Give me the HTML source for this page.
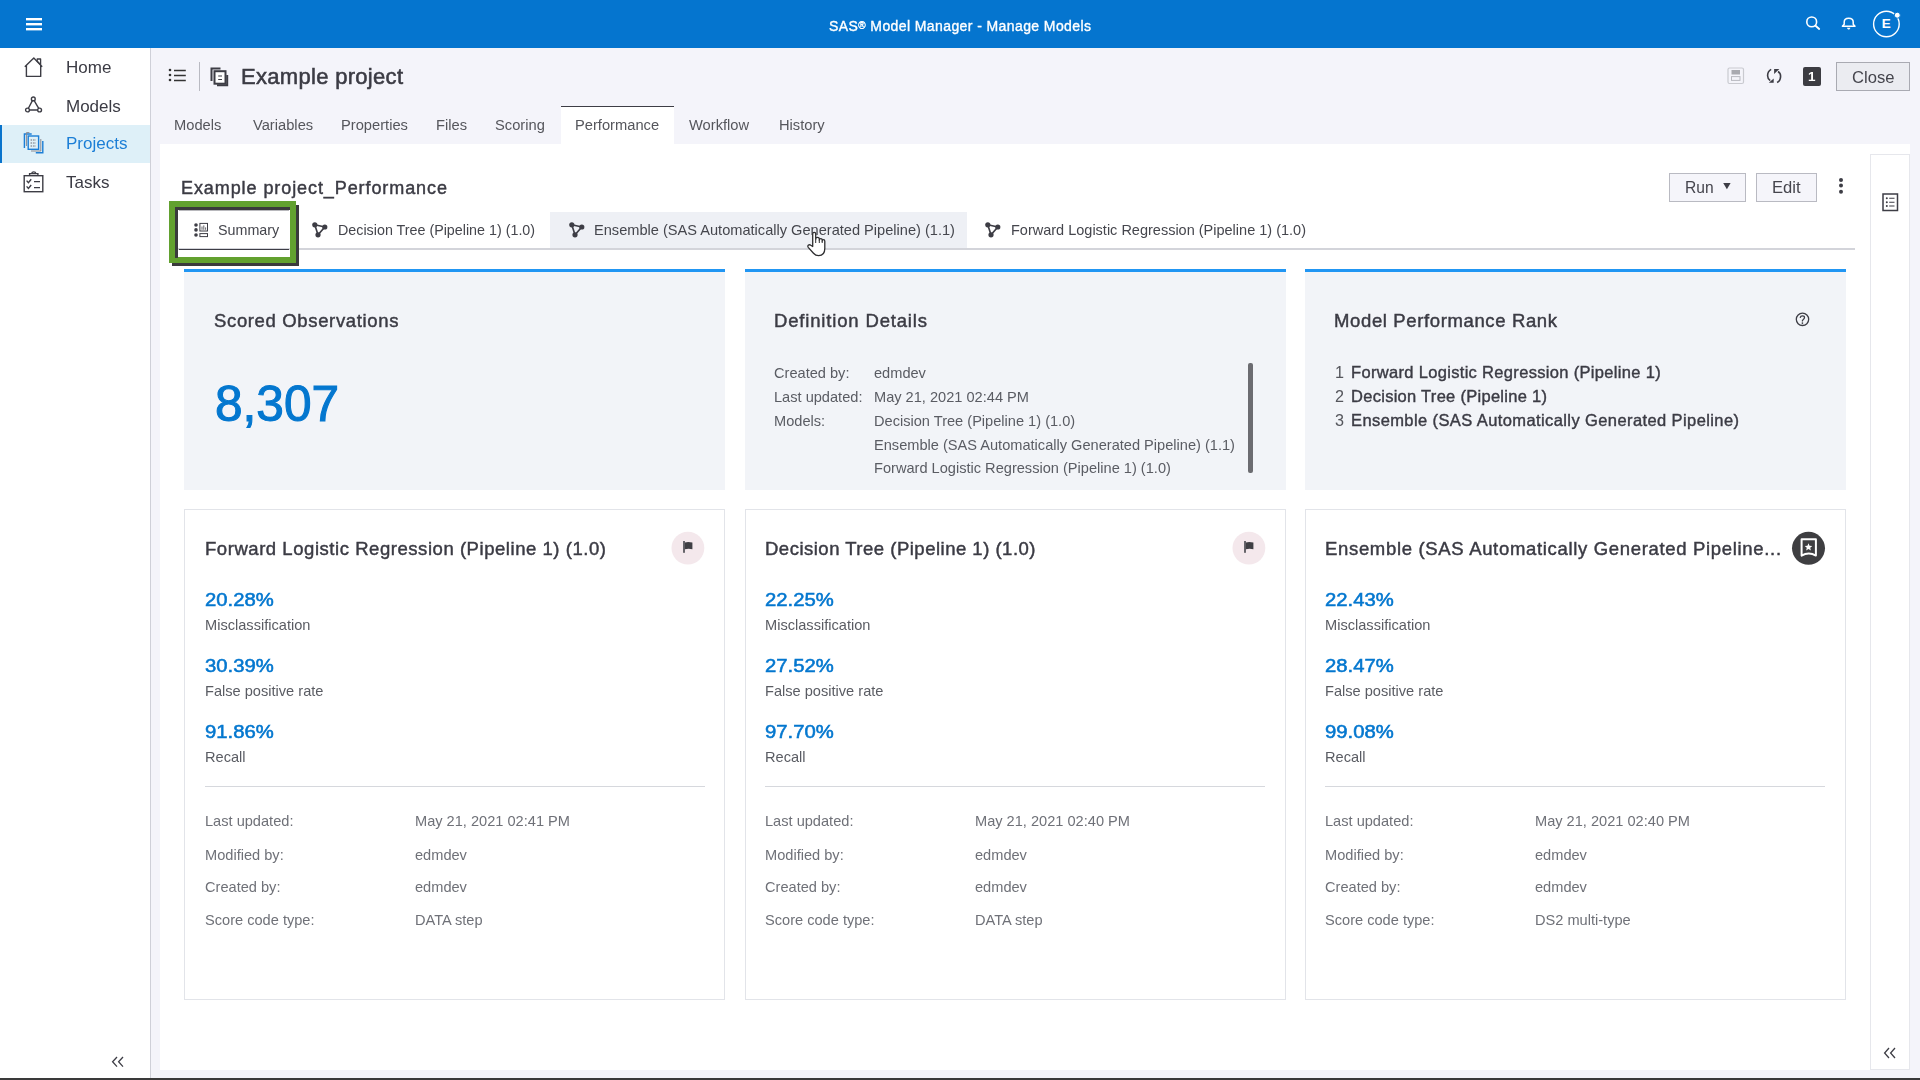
<!DOCTYPE html>
<html><head><meta charset="utf-8"><title>SAS Model Manager - Manage Models</title>
<style>
html,body{margin:0;padding:0;width:1920px;height:1080px;overflow:hidden;background:#f4f4fa}
body{position:relative;font-family:'Liberation Sans', sans-serif}
.t{position:absolute;white-space:nowrap;line-height:1;font-family:'Liberation Sans', sans-serif;will-change:transform}
svg{overflow:visible}
</style></head><body>
<div style="position:absolute;left:0px;top:0px;width:1920px;height:1080px;background:#f4f4fa"></div>
<div style="position:absolute;left:0px;top:0px;width:1920px;height:48px;background:#0575cf"></div>
<svg style="position:absolute;left:26px;top:17px;" width="16" height="14" viewBox="0 0 16 14"><rect x="0" y="1" width="16" height="2.4" fill="#fff"/><rect x="0" y="6" width="16" height="2.4" fill="#fff"/><rect x="0" y="11" width="16" height="2.4" fill="#fff"/></svg>
<div class="t" style="left:829px;top:19px;font-size:14px;font-weight:400;-webkit-text-stroke:0.35px #ffffff;letter-spacing:0.405px;color:#ffffff;">SAS<span style="font-size:10px;position:relative;top:-2px">®</span> Model Manager - Manage Models</div>
<svg style="position:absolute;left:1802px;top:12px;" width="22" height="22" viewBox="0 0 22 22"><circle cx="9.7" cy="9.9" r="4.9" fill="none" stroke="#fff" stroke-width="1.6"/><line x1="13.3" y1="13.5" x2="17.2" y2="17" stroke="#fff" stroke-width="1.8" stroke-linecap="round"/></svg>
<svg style="position:absolute;left:1838px;top:12px;" width="22" height="22" viewBox="0 0 22 22"><path d="M4.4 14.2 L6.2 12.2 L6.2 10 C6.2 7.6 8.2 6.2 10.7 6.2 C13.2 6.2 15.2 7.6 15.2 10 L15.2 12.2 L17 14.2 Z" fill="none" stroke="#fff" stroke-width="1.5" stroke-linejoin="round"/><path d="M9 15.8 L12.4 15.8 C12.1 17 11.5 17.6 10.7 17.6 C9.9 17.6 9.3 17 9 15.8Z" fill="#fff"/></svg>
<svg style="position:absolute;left:1870px;top:8px;" width="34" height="32" viewBox="0 0 34 32"><circle cx="16.4" cy="16" r="12.8" fill="none" stroke="#fff" stroke-width="1.4"/><circle cx="27.3" cy="7.2" r="3" fill="#fff" stroke="#0575cf" stroke-width="1"/><text x="16.3" y="20.2" text-anchor="middle" font-family="Liberation Sans" font-weight="700" font-size="13.5" fill="#fff">E</text></svg>
<div style="position:absolute;left:0px;top:48px;width:150px;height:1030px;background:#ffffff"></div>
<div style="position:absolute;left:150px;top:48px;width:1px;height:1030px;background:#cfd0d8"></div>
<div style="position:absolute;left:0px;top:125px;width:150px;height:38px;background:#def0f8"></div>
<div style="position:absolute;left:0px;top:125px;width:2px;height:38px;background:#0a74cc"></div>
<div class="t" style="left:65.7px;top:59px;font-size:17px;font-weight:400;color:#3b3b44;">Home</div>
<div class="t" style="left:65.7px;top:98px;font-size:17px;font-weight:400;color:#3b3b44;">Models</div>
<div class="t" style="left:65.7px;top:135px;font-size:17px;font-weight:400;color:#1b7ed6;">Projects</div>
<div class="t" style="left:65.7px;top:174px;font-size:17px;font-weight:400;color:#3b3b44;">Tasks</div>
<svg style="position:absolute;left:23px;top:56px;" width="22" height="22" viewBox="0 0 22 22"><path d="M1.8 10.8 L10.8 2 L19.2 10.8 M3.4 9.4 L3.4 20.4 L17.7 20.4 L17.7 9.4" fill="none" stroke="#3d3d45" stroke-width="1.4" stroke-linejoin="round"/><path d="M14.2 5.2 L14.2 3 L17.6 3 L17.6 8.6 Z" fill="none" stroke="#3d3d45" stroke-width="1.3" stroke-linejoin="round"/></svg>
<svg style="position:absolute;left:23px;top:95px;" width="22" height="20" viewBox="0 0 22 20"><circle cx="10.3" cy="3.9" r="1.9" fill="none" stroke="#3d3d45" stroke-width="1.4"/><circle cx="4.5" cy="15" r="1.9" fill="none" stroke="#3d3d45" stroke-width="1.4"/><circle cx="16.6" cy="15" r="1.9" fill="none" stroke="#3d3d45" stroke-width="1.4"/><path d="M9.4 5.6 L5.4 13.3 M11.2 5.6 L15.7 13.3 M6.4 15 L14.7 15" fill="none" stroke="#3d3d45" stroke-width="1.4"/></svg>
<svg style="position:absolute;left:23px;top:132px;" width="22" height="22" viewBox="0 0 22 22"><path d="M1.4 16 L1.4 2 L8.7 2" fill="none" stroke="#1b7ed6" stroke-width="1.4"/><path d="M3.4 14 L3.4 0.6 L6.4 0.6" fill="none" stroke="#8a8a92" stroke-width="1"/><rect x="5.2" y="4" width="10.4" height="13.3" fill="none" stroke="#1b7ed6" stroke-width="1.4"/><path d="M7.6 8 L13 8 M7.6 11 L13 11 M7.6 14 L13 14" stroke="#6a6a72" stroke-width="1" stroke-dasharray="1.5 1"/><path d="M19.8 9 L19.8 20.8 L12.8 20.8" fill="none" stroke="#1b7ed6" stroke-width="1.4"/><path d="M17.8 7 L17.8 19 L8 19" fill="none" stroke="#8a8a92" stroke-width="1"/></svg>
<svg style="position:absolute;left:23px;top:170px;" width="22" height="24" viewBox="0 0 22 24"><rect x="1.2" y="5.7" width="18.6" height="16" fill="none" stroke="#3d3d45" stroke-width="1.4"/><path d="M6.6 5.7 L6.6 3.6 L14.9 3.6 L14.9 5.7" fill="none" stroke="#3d3d45" stroke-width="1.4"/><path d="M8.6 3.6 A2.2 2.2 0 0 1 12.9 3.6" fill="none" stroke="#3d3d45" stroke-width="1.4"/><path d="M3.6 10.6 L5.4 12.6 L8.2 9.2 M3.6 16.4 L5.4 18.4 L8.2 15" fill="none" stroke="#3d3d45" stroke-width="1.4"/><path d="M11 11.6 L17 11.6 M11 17.6 L17 17.6" fill="none" stroke="#3d3d45" stroke-width="1.4"/></svg>
<svg style="position:absolute;left:110px;top:1055px;" width="16" height="14" viewBox="0 0 16 14"><path d="M7 2 L2.6 6.8 L7 11.6 M13 2 L8.6 6.8 L13 11.6" fill="none" stroke="#3d3d45" stroke-width="1.3"/></svg>
<div style="position:absolute;left:0px;top:1078px;width:1920px;height:2px;background:#3a3a3a"></div>
<svg style="position:absolute;left:168px;top:67px;" width="20" height="16" viewBox="0 0 20 16"><circle cx="2" cy="3" r="1.3" fill="#333"/><circle cx="2" cy="8" r="1.3" fill="#333"/><circle cx="2" cy="13" r="1.3" fill="#333"/><path d="M6 3.5 L17.8 3.5 M6 8.5 L17.8 8.5 M6 13.5 L17.8 13.5" stroke="#333" stroke-width="1.3"/></svg>
<div style="position:absolute;left:199px;top:62px;width:1px;height:29px;background:#b9bac2"></div>
<svg style="position:absolute;left:210px;top:67px;" width="20" height="20" viewBox="0 0 20 20"><path d="M1.5 14 L1.5 1.5 L10.5 1.5" fill="none" stroke="#3d3d45" stroke-width="2"/><rect x="4.5" y="4.2" width="11" height="12.5" fill="#fff" stroke="#3d3d45" stroke-width="2"/><path d="M17.2 8 L17.2 18.2 L7 18.2" fill="none" stroke="#3d3d45" stroke-width="2"/><path d="M8.2 9 L12 9 M8.2 12.5 L12 12.5" stroke="#3d3d45" stroke-width="1.2"/></svg>
<div class="t" style="left:241px;top:66px;font-size:22px;font-weight:400;-webkit-text-stroke:0.55px #3b3b44;letter-spacing:0.304px;color:#3b3b44;">Example project</div>
<svg style="position:absolute;left:1727px;top:67px;" width="18" height="18" viewBox="0 0 18 18"><rect x="1" y="1" width="15.5" height="15.5" rx="1.5" fill="none" stroke="#c9cad0" stroke-width="1.2"/><rect x="4.5" y="3" width="8.5" height="4.5" fill="#a9aab0"/><rect x="4.5" y="9.6" width="8.5" height="3.8" fill="none" stroke="#b9bac0" stroke-width="1"/></svg>
<svg style="position:absolute;left:1765px;top:67px;" width="18" height="18" viewBox="0 0 18 18"><path d="M6.2 2.4 C3.8 3.6 2.6 6 2.6 8.8 C2.6 10.8 3.4 12.4 5.2 13.6" fill="none" stroke="#3d3d45" stroke-width="1.6"/><path d="M3.8 15.7 L8.7 15.7 L8.7 11.4 Z" fill="#3d3d45"/><path d="M12.1 15.5 C14.4 14.3 15.6 12 15.6 9.2 C15.6 7.2 14.8 5.6 13 4.5" fill="none" stroke="#3d3d45" stroke-width="1.6"/><path d="M9.1 2.1 L14.4 2.1 L9.1 6.9 Z" fill="#3d3d45"/></svg>
<div style="position:absolute;left:1803px;top:67px;width:18px;height:18.5px;background:#3c3c42;border-radius:2px"></div>
<div class="t" style="left:1808.2px;top:70px;font-size:13.5px;font-weight:700;color:#fff;">1</div>
<div style="position:absolute;left:1836px;top:62px;width:74px;height:29px;background:#ebecf1;border:1px solid #a9aab2;box-sizing:border-box"></div>
<div class="t" style="left:1852px;top:70px;font-size:16.6px;font-weight:400;color:#45454d;">Close</div>
<div style="position:absolute;left:561px;top:106px;width:112.5px;height:38px;background:#ffffff"></div>
<div style="position:absolute;left:561px;top:105.6px;width:112.5px;height:1.6px;background:#3d3d45"></div>
<div class="t" style="left:174px;top:118px;font-size:14.7px;font-weight:400;color:#55565c;">Models</div>
<div class="t" style="left:253px;top:118px;font-size:14.7px;font-weight:400;color:#55565c;">Variables</div>
<div class="t" style="left:341px;top:118px;font-size:14.7px;font-weight:400;color:#55565c;">Properties</div>
<div class="t" style="left:436px;top:118px;font-size:14.7px;font-weight:400;color:#55565c;">Files</div>
<div class="t" style="left:495px;top:118px;font-size:14.7px;font-weight:400;color:#55565c;">Scoring</div>
<div class="t" style="left:575px;top:118px;font-size:14.7px;font-weight:400;color:#55565c;">Performance</div>
<div class="t" style="left:689px;top:118px;font-size:14.7px;font-weight:400;color:#55565c;">Workflow</div>
<div class="t" style="left:779px;top:118px;font-size:14.7px;font-weight:400;color:#55565c;">History</div>
<div style="position:absolute;left:160px;top:144px;width:1750px;height:926px;background:#ffffff"></div>
<div style="position:absolute;left:1870px;top:154px;width:40px;height:916px;background:#ffffff;border:1px solid #e6e7ec;box-sizing:border-box"></div>
<svg style="position:absolute;left:1882px;top:193px;" width="17" height="19" viewBox="0 0 17 19"><rect x="1" y="1" width="14.5" height="16.5" fill="none" stroke="#3d3d45" stroke-width="1.5"/><circle cx="4.8" cy="5.2" r="1" fill="#3d3d45"/><circle cx="4.8" cy="9.2" r="1" fill="#3d3d45"/><circle cx="4.8" cy="13" r="1" fill="#3d3d45"/><path d="M7.2 5.2 L12.5 5.2 M7.2 9.2 L12.5 9.2 M7.2 13 L12.5 13" stroke="#3d3d45" stroke-width="1.1"/></svg>
<svg style="position:absolute;left:1882px;top:1046px;" width="16" height="15" viewBox="0 0 16 15"><path d="M7 2 L2.6 7 L7 12 M13 2 L8.6 7 L13 12" fill="none" stroke="#3d3d45" stroke-width="1.3"/></svg>
<div class="t" style="left:180.6px;top:179px;font-size:18px;font-weight:400;-webkit-text-stroke:0.45px #3b3b44;letter-spacing:0.918px;color:#3b3b44;">Example project_Performance</div>
<div style="position:absolute;left:1669px;top:173px;width:77px;height:29px;background:#f5f5fa;border:1px solid #b9bac2;box-sizing:border-box"></div>
<div class="t" style="left:1685px;top:180px;font-size:15.6px;font-weight:400;color:#45454d;">Run</div>
<svg style="position:absolute;left:1722px;top:182px;" width="10" height="8" viewBox="0 0 10 8"><path d="M1.2 1 L8.6 1 L4.9 7.2 Z" fill="#3d3d45"/></svg>
<div style="position:absolute;left:1756px;top:173px;width:61px;height:29px;background:#f5f5fa;border:1px solid #b9bac2;box-sizing:border-box"></div>
<div class="t" style="left:1771.5px;top:180px;font-size:16.6px;font-weight:400;color:#45454d;">Edit</div>
<svg style="position:absolute;left:1837px;top:176px;" width="8" height="20" viewBox="0 0 8 20"><circle cx="4" cy="4" r="2" fill="#3d3d45"/><circle cx="4" cy="9.5" r="2" fill="#3d3d45"/><circle cx="4" cy="15.8" r="2" fill="#3d3d45"/></svg>
<div style="position:absolute;left:175px;top:248px;width:1680px;height:2px;background:#d3d4da"></div>
<div style="position:absolute;left:550px;top:211.5px;width:417px;height:36.5px;background:#eef0f5"></div>
<div style="position:absolute;left:179px;top:248.5px;width:110px;height:1.5px;background:#3d3d45"></div>
<svg style="position:absolute;left:193px;top:222px;" width="16" height="16" viewBox="0 0 16 16"><circle cx="3" cy="3" r="1.8" fill="#3d3d45"/><circle cx="3" cy="7.9" r="1.8" fill="#3d3d45"/><circle cx="3" cy="13" r="1.8" fill="#3d3d45"/><rect x="6.9" y="1.4" width="7.6" height="7.6" fill="none" stroke="#3d3d45" stroke-width="1"/><path d="M9 7.8 L9 4.5 M10.8 7.8 L10.8 3.4 M12.6 7.8 L12.6 5.4" stroke="#3d3d45" stroke-width="0.8"/><rect x="6.9" y="11.6" width="7.6" height="3" fill="none" stroke="#3d3d45" stroke-width="1"/></svg>
<div class="t" style="left:218.4px;top:223px;font-size:14.3px;font-weight:400;color:#45464d;">Summary</div>
<svg style="position:absolute;left:312px;top:222px;" width="16" height="16" viewBox="0 0 16 16"><circle cx="2.8" cy="2.8" r="2.6" fill="#3d3d45"/><circle cx="12.8" cy="5" r="2.6" fill="#3d3d45"/><circle cx="6" cy="12.8" r="2.6" fill="#3d3d45"/><path d="M2.8 2.8 L12.8 5 L6 12.8 Z" fill="none" stroke="#3d3d45" stroke-width="1.6"/></svg>
<div class="t" style="left:338px;top:223px;font-size:14.3px;font-weight:400;color:#45464d;">Decision Tree (Pipeline 1) (1.0)</div>
<svg style="position:absolute;left:569px;top:222px;" width="16" height="16" viewBox="0 0 16 16"><circle cx="2.8" cy="2.8" r="2.6" fill="#3d3d45"/><circle cx="12.8" cy="5" r="2.6" fill="#3d3d45"/><circle cx="6" cy="12.8" r="2.6" fill="#3d3d45"/><path d="M2.8 2.8 L12.8 5 L6 12.8 Z" fill="none" stroke="#3d3d45" stroke-width="1.6"/></svg>
<div class="t" style="left:593.5px;top:223px;font-size:14.6px;font-weight:400;color:#45464d;">Ensemble (SAS Automatically Generated Pipeline) (1.1)</div>
<svg style="position:absolute;left:985px;top:222px;" width="16" height="16" viewBox="0 0 16 16"><circle cx="2.8" cy="2.8" r="2.6" fill="#3d3d45"/><circle cx="12.8" cy="5" r="2.6" fill="#3d3d45"/><circle cx="6" cy="12.8" r="2.6" fill="#3d3d45"/><path d="M2.8 2.8 L12.8 5 L6 12.8 Z" fill="none" stroke="#3d3d45" stroke-width="1.6"/></svg>
<div class="t" style="left:1011px;top:223px;font-size:14.5px;font-weight:400;color:#45464d;">Forward Logistic Regression (Pipeline 1) (1.0)</div>
<div style="position:absolute;left:184px;top:269px;width:541px;height:221px;background:#f2f4f8"></div>
<div style="position:absolute;left:184px;top:269px;width:541px;height:3px;background:#2196f3"></div>
<div style="position:absolute;left:745px;top:269px;width:541px;height:221px;background:#f2f4f8"></div>
<div style="position:absolute;left:745px;top:269px;width:541px;height:3px;background:#2196f3"></div>
<div style="position:absolute;left:1305px;top:269px;width:541px;height:221px;background:#f2f4f8"></div>
<div style="position:absolute;left:1305px;top:269px;width:541px;height:3px;background:#2196f3"></div>
<div class="t" style="left:213.6px;top:312px;font-size:18.5px;font-weight:400;-webkit-text-stroke:0.46px #3b3b44;letter-spacing:0.646px;color:#3b3b44;">Scored Observations</div>
<div class="t" style="left:215px;top:380px;font-size:49.6px;font-weight:400;color:#0477cf;-webkit-text-stroke:1.1px #0477cf">8,307</div>
<div class="t" style="left:774px;top:312px;font-size:18.5px;font-weight:400;-webkit-text-stroke:0.46px #3b3b44;letter-spacing:0.834px;color:#3b3b44;">Definition Details</div>
<div class="t" style="left:774px;top:366px;font-size:14.6px;font-weight:400;color:#5a5c63;">Created by:</div>
<div class="t" style="left:873.8px;top:366px;font-size:14.6px;font-weight:400;color:#5a5c63;">edmdev</div>
<div class="t" style="left:774px;top:390px;font-size:14.6px;font-weight:400;color:#5a5c63;">Last updated:</div>
<div class="t" style="left:873.8px;top:390px;font-size:14.6px;font-weight:400;color:#5a5c63;">May 21, 2021 02:44 PM</div>
<div class="t" style="left:774px;top:414px;font-size:14.6px;font-weight:400;color:#5a5c63;">Models:</div>
<div class="t" style="left:873.8px;top:414px;font-size:14.6px;font-weight:400;color:#5a5c63;">Decision Tree (Pipeline 1) (1.0)</div>
<div class="t" style="left:873.8px;top:438px;font-size:14.6px;font-weight:400;color:#5a5c63;">Ensemble (SAS Automatically Generated Pipeline) (1.1)</div>
<div class="t" style="left:873.8px;top:461px;font-size:14.6px;font-weight:400;color:#5a5c63;">Forward Logistic Regression (Pipeline 1) (1.0)</div>
<div style="position:absolute;left:1248px;top:363px;width:5px;height:110px;background:#6c6c71;border-radius:2px"></div>
<div class="t" style="left:1334.3px;top:312px;font-size:18.5px;font-weight:400;-webkit-text-stroke:0.46px #3b3b44;letter-spacing:0.630px;color:#3b3b44;">Model Performance Rank</div>
<svg style="position:absolute;left:1793px;top:311px;" width="18" height="18" viewBox="0 0 18 18"><circle cx="9.5" cy="8.3" r="6.2" fill="none" stroke="#3d3d45" stroke-width="1.3"/><path d="M7.3 6.4 C7.5 5.3 8.4 4.9 9.5 4.9 C10.7 4.9 11.5 5.6 11.5 6.6 C11.5 7.6 10.8 8.1 10.1 8.7 C9.6 9.1 9.4 9.4 9.4 9.9" fill="none" stroke="#3d3d45" stroke-width="1.3" stroke-linecap="round"/><circle cx="9.4" cy="12.1" r="0.85" fill="#3d3d45"/></svg>
<div class="t" style="left:1334.5px;top:364px;font-size:16.2px;font-weight:400;color:#55565c;">1</div>
<div class="t" style="left:1351px;top:364px;font-size:16.5px;font-weight:400;-webkit-text-stroke:0.41px #3b3b44;letter-spacing:0.322px;color:#3b3b44;">Forward Logistic Regression (Pipeline 1)</div>
<div class="t" style="left:1334.5px;top:388px;font-size:16.2px;font-weight:400;color:#55565c;">2</div>
<div class="t" style="left:1351px;top:388px;font-size:16.5px;font-weight:400;-webkit-text-stroke:0.41px #3b3b44;letter-spacing:0.283px;color:#3b3b44;">Decision Tree (Pipeline 1)</div>
<div class="t" style="left:1334.5px;top:412px;font-size:16.2px;font-weight:400;color:#55565c;">3</div>
<div class="t" style="left:1351px;top:412px;font-size:16.5px;font-weight:400;-webkit-text-stroke:0.41px #3b3b44;letter-spacing:0.400px;color:#3b3b44;">Ensemble (SAS Automatically Generated Pipeline)</div>
<div style="position:absolute;left:184px;top:509px;width:541px;height:491px;background:#fff;border:1px solid #e2e4e9;box-sizing:border-box"></div>
<div class="t" style="left:205px;top:540px;font-size:18.5px;font-weight:400;-webkit-text-stroke:0.46px #3b3b44;letter-spacing:0.548px;color:#3b3b44;">Forward Logistic Regression (Pipeline 1) (1.0)</div>
<div class="t" style="left:205px;top:592px;font-size:17.5px;font-weight:400;-webkit-text-stroke:0.53px #0477cf;transform:scaleX(1.1574);transform-origin:0 0;color:#0477cf;">20.28%</div>
<div class="t" style="left:205px;top:618px;font-size:14.6px;font-weight:400;color:#5a5c63;">Misclassification</div>
<div class="t" style="left:205px;top:658px;font-size:17.5px;font-weight:400;-webkit-text-stroke:0.53px #0477cf;transform:scaleX(1.1574);transform-origin:0 0;color:#0477cf;">30.39%</div>
<div class="t" style="left:205px;top:684px;font-size:14.6px;font-weight:400;color:#5a5c63;">False positive rate</div>
<div class="t" style="left:205px;top:724px;font-size:17.5px;font-weight:400;-webkit-text-stroke:0.53px #0477cf;transform:scaleX(1.1574);transform-origin:0 0;color:#0477cf;">91.86%</div>
<div class="t" style="left:205px;top:750px;font-size:14.6px;font-weight:400;color:#5a5c63;">Recall</div>
<div style="position:absolute;left:205px;top:786px;width:500px;height:1px;background:#d6d8dd"></div>
<div class="t" style="left:205px;top:814px;font-size:14.6px;font-weight:400;color:#6f7178;">Last updated:</div>
<div class="t" style="left:415px;top:814px;font-size:14.6px;font-weight:400;color:#6f7178;">May 21, 2021 02:41 PM</div>
<div class="t" style="left:205px;top:848px;font-size:14.6px;font-weight:400;color:#6f7178;">Modified by:</div>
<div class="t" style="left:415px;top:848px;font-size:14.6px;font-weight:400;color:#6f7178;">edmdev</div>
<div class="t" style="left:205px;top:880px;font-size:14.6px;font-weight:400;color:#6f7178;">Created by:</div>
<div class="t" style="left:415px;top:880px;font-size:14.6px;font-weight:400;color:#6f7178;">edmdev</div>
<div class="t" style="left:205px;top:913px;font-size:14.6px;font-weight:400;color:#6f7178;">Score code type:</div>
<div class="t" style="left:415px;top:913px;font-size:14.6px;font-weight:400;color:#6f7178;">DATA step</div>
<svg style="position:absolute;left:671px;top:532px;" width="34" height="34" viewBox="0 0 34 34"><circle cx="16.9" cy="16.1" r="16.4" fill="#f4e8ec"/><rect x="12.2" y="9" width="1.6" height="11.8" fill="#45454b"/><path d="M13.8 10.4 Q17.6 9.4 21.4 10.6 L21.4 17.2 Q17.6 16.2 13.8 17.2 Z" fill="#3f3f44"/></svg>
<div style="position:absolute;left:745px;top:509px;width:541px;height:491px;background:#fff;border:1px solid #e2e4e9;box-sizing:border-box"></div>
<div class="t" style="left:765px;top:540px;font-size:18.5px;font-weight:400;-webkit-text-stroke:0.46px #3b3b44;letter-spacing:0.500px;color:#3b3b44;">Decision Tree (Pipeline 1) (1.0)</div>
<div class="t" style="left:765px;top:592px;font-size:17.5px;font-weight:400;-webkit-text-stroke:0.53px #0477cf;transform:scaleX(1.1574);transform-origin:0 0;color:#0477cf;">22.25%</div>
<div class="t" style="left:765px;top:618px;font-size:14.6px;font-weight:400;color:#5a5c63;">Misclassification</div>
<div class="t" style="left:765px;top:658px;font-size:17.5px;font-weight:400;-webkit-text-stroke:0.53px #0477cf;transform:scaleX(1.1574);transform-origin:0 0;color:#0477cf;">27.52%</div>
<div class="t" style="left:765px;top:684px;font-size:14.6px;font-weight:400;color:#5a5c63;">False positive rate</div>
<div class="t" style="left:765px;top:724px;font-size:17.5px;font-weight:400;-webkit-text-stroke:0.53px #0477cf;transform:scaleX(1.1574);transform-origin:0 0;color:#0477cf;">97.70%</div>
<div class="t" style="left:765px;top:750px;font-size:14.6px;font-weight:400;color:#5a5c63;">Recall</div>
<div style="position:absolute;left:765px;top:786px;width:500px;height:1px;background:#d6d8dd"></div>
<div class="t" style="left:765px;top:814px;font-size:14.6px;font-weight:400;color:#6f7178;">Last updated:</div>
<div class="t" style="left:975px;top:814px;font-size:14.6px;font-weight:400;color:#6f7178;">May 21, 2021 02:40 PM</div>
<div class="t" style="left:765px;top:848px;font-size:14.6px;font-weight:400;color:#6f7178;">Modified by:</div>
<div class="t" style="left:975px;top:848px;font-size:14.6px;font-weight:400;color:#6f7178;">edmdev</div>
<div class="t" style="left:765px;top:880px;font-size:14.6px;font-weight:400;color:#6f7178;">Created by:</div>
<div class="t" style="left:975px;top:880px;font-size:14.6px;font-weight:400;color:#6f7178;">edmdev</div>
<div class="t" style="left:765px;top:913px;font-size:14.6px;font-weight:400;color:#6f7178;">Score code type:</div>
<div class="t" style="left:975px;top:913px;font-size:14.6px;font-weight:400;color:#6f7178;">DATA step</div>
<svg style="position:absolute;left:1232px;top:532px;" width="34" height="34" viewBox="0 0 34 34"><circle cx="16.9" cy="16.1" r="16.4" fill="#f4e8ec"/><rect x="12.2" y="9" width="1.6" height="11.8" fill="#45454b"/><path d="M13.8 10.4 Q17.6 9.4 21.4 10.6 L21.4 17.2 Q17.6 16.2 13.8 17.2 Z" fill="#3f3f44"/></svg>
<div style="position:absolute;left:1305px;top:509px;width:541px;height:491px;background:#fff;border:1px solid #e2e4e9;box-sizing:border-box"></div>
<div class="t" style="left:1325px;top:540px;font-size:18.5px;font-weight:400;-webkit-text-stroke:0.46px #3b3b44;letter-spacing:0.674px;color:#3b3b44;">Ensemble (SAS Automatically Generated Pipeline...</div>
<div class="t" style="left:1325px;top:592px;font-size:17.5px;font-weight:400;-webkit-text-stroke:0.53px #0477cf;transform:scaleX(1.1574);transform-origin:0 0;color:#0477cf;">22.43%</div>
<div class="t" style="left:1325px;top:618px;font-size:14.6px;font-weight:400;color:#5a5c63;">Misclassification</div>
<div class="t" style="left:1325px;top:658px;font-size:17.5px;font-weight:400;-webkit-text-stroke:0.53px #0477cf;transform:scaleX(1.1574);transform-origin:0 0;color:#0477cf;">28.47%</div>
<div class="t" style="left:1325px;top:684px;font-size:14.6px;font-weight:400;color:#5a5c63;">False positive rate</div>
<div class="t" style="left:1325px;top:724px;font-size:17.5px;font-weight:400;-webkit-text-stroke:0.53px #0477cf;transform:scaleX(1.1574);transform-origin:0 0;color:#0477cf;">99.08%</div>
<div class="t" style="left:1325px;top:750px;font-size:14.6px;font-weight:400;color:#5a5c63;">Recall</div>
<div style="position:absolute;left:1325px;top:786px;width:500px;height:1px;background:#d6d8dd"></div>
<div class="t" style="left:1325px;top:814px;font-size:14.6px;font-weight:400;color:#6f7178;">Last updated:</div>
<div class="t" style="left:1535px;top:814px;font-size:14.6px;font-weight:400;color:#6f7178;">May 21, 2021 02:40 PM</div>
<div class="t" style="left:1325px;top:848px;font-size:14.6px;font-weight:400;color:#6f7178;">Modified by:</div>
<div class="t" style="left:1535px;top:848px;font-size:14.6px;font-weight:400;color:#6f7178;">edmdev</div>
<div class="t" style="left:1325px;top:880px;font-size:14.6px;font-weight:400;color:#6f7178;">Created by:</div>
<div class="t" style="left:1535px;top:880px;font-size:14.6px;font-weight:400;color:#6f7178;">edmdev</div>
<div class="t" style="left:1325px;top:913px;font-size:14.6px;font-weight:400;color:#6f7178;">Score code type:</div>
<div class="t" style="left:1535px;top:913px;font-size:14.6px;font-weight:400;color:#6f7178;">DS2 multi-type</div>
<svg style="position:absolute;left:1791px;top:531px;" width="34" height="34" viewBox="0 0 34 34"><circle cx="17.5" cy="17.3" r="16.5" fill="#3e3e41"/><path d="M10.6 8.3 L24.9 8.3 L24.9 24.6 Q17.8 20.6 10.6 24.6 Z" fill="none" stroke="#fff" stroke-width="2" stroke-linejoin="round"/><path d="M17.50 12.20 L18.56 14.74 L21.30 14.96 L19.21 16.76 L19.85 19.44 L17.50 18.00 L15.15 19.44 L15.79 16.76 L13.70 14.96 L16.44 14.74 Z" fill="#fff"/></svg>
<div style="position:absolute;left:172px;top:205px;width:127px;height:61px;border:3px solid #3a3a3c;box-sizing:border-box"></div>
<div style="position:absolute;left:169px;top:201px;width:127px;height:62px;border:6px solid #62a12f;box-sizing:border-box"></div>
<div style="position:absolute;left:176px;top:207px;width:114px;height:3px;background:#3a3a3c"></div>
<div style="position:absolute;left:175px;top:207px;width:3px;height:51px;background:#3a3a3c"></div>
<div style="position:absolute;left:179px;top:210px;width:110px;height:1px;background:#b8b8bc"></div>
<svg style="position:absolute;left:805px;top:230px;" width="24" height="28" viewBox="0 0 24 28"><path d="M7.7 16.5 L7.7 3.8 Q7.7 2.4 9.2 2.4 Q10.7 2.4 10.7 3.8 L10.7 9.2 Q10.7 7.3 12.5 7.3 Q14.3 7.3 14.3 9 L14.3 10.2 Q14.3 8.7 15.8 8.7 Q17.2 8.7 17.2 10.1 L17.2 11.2 Q17.2 9.7 18.5 9.7 Q19.8 9.7 19.8 11.2 L19.8 18.5 Q19.8 25.6 13.6 25.6 Q10.6 25.6 8.5 23.2 L3.2 17.4 Q2.2 16.1 3.4 15.1 Q4.6 14.3 5.8 15.3 Z" fill="#fff" stroke="#2e2e30" stroke-width="1.3" stroke-linejoin="round"/><path d="M10.7 9.2 L10.7 13 M14.3 10.2 L14.3 13 M17.2 11.2 L17.2 13" stroke="#2e2e30" stroke-width="1"/></svg>
</body></html>
